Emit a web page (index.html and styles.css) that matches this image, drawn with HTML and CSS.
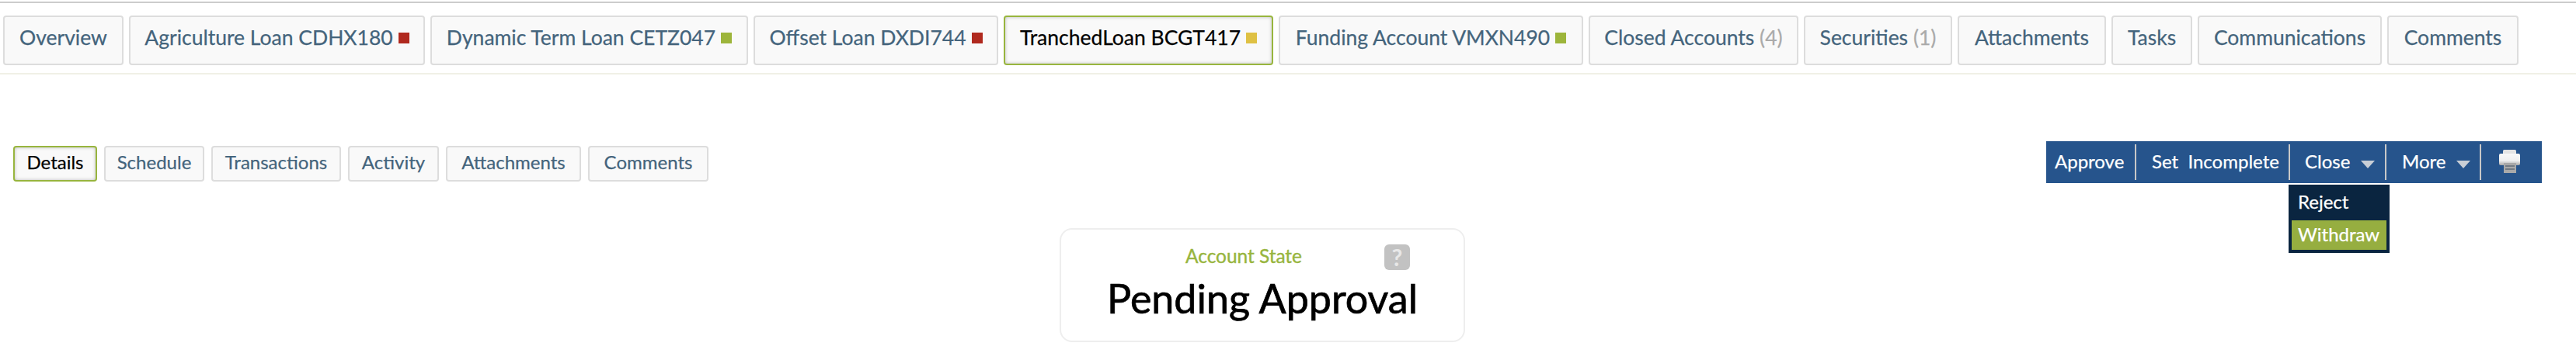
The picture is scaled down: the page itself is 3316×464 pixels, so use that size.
FILE: index.html
```html
<!DOCTYPE html>
<html lang="en">
<head>
<meta charset="utf-8">
<title>Tranched Loan</title>
<link rel="stylesheet" href="styles.css">
</head>
<body>
<nav class="main-tabs">
  <a class="tab tab-overview">Overview</a>
  <a class="tab tab-agri">Agriculture Loan CDHX180<i class="dot red"></i></a>
  <a class="tab tab-dyn">Dynamic Term Loan CETZ047<i class="dot green"></i></a>
  <a class="tab tab-off">Offset Loan DXDI744<i class="dot red"></i></a>
  <a class="tab tab-tr active">TranchedLoan BCGT417<i class="dot yellow"></i></a>
  <a class="tab tab-fund">Funding Account VMXN490<i class="dot green"></i></a>
  <a class="tab tab-closed">Closed Accounts <span class="count">(4)</span></a>
  <a class="tab tab-sec">Securities <span class="count">(1)</span></a>
  <a class="tab tab-att">Attachments</a>
  <a class="tab tab-tasks">Tasks</a>
  <a class="tab tab-comm">Communications</a>
  <a class="tab tab-com">Comments</a>
</nav>
<section class="sub-row">
  <div class="sub-tabs">
    <a class="sub s-det active">Details</a>
    <a class="sub s-sch">Schedule</a>
    <a class="sub s-tra">Transactions</a>
    <a class="sub s-act">Activity</a>
    <a class="sub s-att">Attachments</a>
    <a class="sub s-com">Comments</a>
  </div>
  <div class="toolbar">
    <a class="tool t-approve">Approve</a>
    <a class="tool t-set">Set&nbsp; Incomplete</a>
    <div class="tool t-close">Close<i class="caret"></i>
      <ul class="menu">
        <li>Reject</li>
        <li class="hover">Withdraw</li>
      </ul>
    </div>
    <a class="tool t-more">More<i class="caret"></i></a>
    <a class="tool t-print">
      <svg class="printer" width="27" height="30" viewBox="0 0 27 30">
        <defs><linearGradient id="pr" x1="0" y1="0" x2="0" y2="1"><stop offset="0" stop-color="#f8f8f8"/><stop offset=".6" stop-color="#f0f0f0"/><stop offset="1" stop-color="#a8a8a8"/></linearGradient></defs>
        <rect x="5" y="0" width="17" height="6" rx="1.5" fill="#e4e4e4"/>
        <rect x="0" y="5" width="27" height="15" rx="2" fill="url(#pr)"/>
        <rect x="6" y="17" width="16" height="13" fill="#a9a9a9"/>
        <rect x="8" y="20" width="12" height="2" fill="#737b84"/>
        <rect x="8" y="24" width="12" height="2" fill="#737b84"/>
      </svg>
    </a>
  </div>
</section>
<section class="state-card">
  <div class="state-label">Account State</div>
  <div class="state-value">Pending Approval</div>
  <span class="help">?</span>
</section>
</body>
</html>
```
FILE: styles.css
```css
* { box-sizing: border-box; }
html, body { margin: 0; padding: 0; background: #fff; }
body { font-family: Lato, "Open Sans", sans-serif; height: 464px; overflow: hidden; padding-top: 2px; }
.main-tabs {
  display: flex; gap: 7px;
  padding: 16px 0 0 4px;
  border-top: 2px solid #ccc;
  border-bottom: 2px solid #f0f0e6;
  box-sizing: content-box;
  height: 74px;
}
.tab {
  display: flex; align-items: center; justify-content: center;
  height: 64px; padding-bottom: 8px;
  background: #f9f9f9; color: #44647c;
  border: 2px solid #ddd; border-radius: 4px;
  font-size: 26.5px; white-space: pre; -webkit-text-stroke: .25px;
}
.tab.active { color: #000; border-color: #98b53e; box-shadow: inset 0 0 4px rgba(0,0,0,.25); }
.tab-overview { width: 155px; }
.tab-agri { width: 381px; }
.tab-dyn { width: 409px; }
.tab-off { width: 315px; }
.tab-tr { width: 347px; }
.tab-fund { width: 392px; }
.tab-closed { width: 270px; }
.tab-sec { width: 191px; }
.tab-att { width: 191px; }
.tab-tasks { width: 104px; }
.tab-comm { width: 237px; }
.tab-com { width: 169px; }
.count { color: #aaa; }
.dot { display: inline-block; width: 14px; height: 14px; margin-left: 7px; margin-top: 2px; }
.red { background: #b0291e; }
.green { background: #9db53b; }
.yellow { background: #dfc144; }
.sub-row {
  display: flex; justify-content: space-between; align-items: flex-start;
  margin-top: 86px; padding: 0 44px 0 17px;
}
.sub-tabs { display: flex; gap: 9px; margin-top: 6px; }
.sub {
  display: flex; align-items: center; justify-content: center;
  height: 46px; padding-bottom: 5px;
  background: #f9f9f9; color: #44647c;
  border: 2px solid #ddd; border-radius: 4px; font-size: 24px; -webkit-text-stroke: .25px;
}
.sub.active { color: #000; border-color: #98b53e; box-shadow: inset 0 0 4px rgba(0,0,0,.25); }
.s-det { width: 108px; }
.s-sch { width: 129px; }
.s-tra { width: 167px; }
.s-act { width: 117px; }
.s-att { width: 174px; }
.s-com { width: 155px; }
.toolbar {
  display: flex; align-items: center; height: 54px; width: 638px;
  background: #26548c; color: #fff; font-size: 24px; -webkit-text-stroke: .25px;
}
.tool {
  position: relative; display: flex; align-items: center;
  height: 46px; padding: 0 0 3px 20px; border-right: 2px solid #c8c8c8;
}
.t-approve { width: 116px; padding-left: 11px; }
.t-set { width: 198px; }
.t-close { width: 124px; padding-left: 19px; }
.t-more { width: 122px; }
.t-print { width: 78px; border-right: 0; padding-left: 23px; }
.printer { filter: blur(.5px); }
.caret {
  width: 0; height: 0; margin-left: 14px; margin-top: 8px;
  border-left: 9px solid transparent; border-right: 9px solid transparent;
  border-top: 10px solid #c8ced6;
}
.menu {
  position: absolute; left: -2px; top: 52px; width: 130px; height: 88px;
  margin: 0; padding: 4px; list-style: none;
  background: #0a2540; font-size: 24px; z-index: 2;
}
.menu li { height: 38px; padding-left: 8px; line-height: 35px; }
.menu li:first-child { height: 42px; line-height: 36px; }
.menu .hover { background: #96ae40; }
.state-card {
  position: relative;
  width: 522px; height: 147px; margin: 58px 0 0 1364px;
  border: 2px solid #eee; border-radius: 16px; text-align: center;
}
.state-label { color: #98b53e; font-size: 24.4px; line-height: 30px; margin-top: 19px; margin-right: 48px; -webkit-text-stroke: .4px; }
.state-value { color: #000; font-size: 52px; line-height: 62px; margin-top: 8px; -webkit-text-stroke: .7px; }
.help {
  position: absolute; left: 416px; top: 19px; width: 33px; height: 33px;
  background: #c2c2c2; border-radius: 6px; color: #e8e8e8;
  font-size: 30px; font-weight: 700; line-height: 33px; text-align: center;
}
```
